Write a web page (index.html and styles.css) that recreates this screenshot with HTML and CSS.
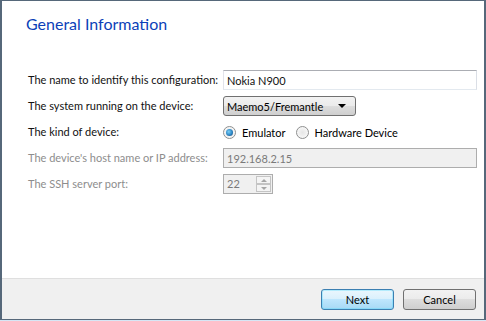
FILE: index.html
```html
<!DOCTYPE html>
<html lang="en">

<head>
    <meta charset="UTF-8">
    <meta name="viewport" content="width=device-width, initial-scale=1.0">
    <title>General Information</title>
    <link rel="stylesheet" href="styles.css">
</head>

<body>
    <div class="wizard">
        <div class="page">
            <div class="title">General Information</div>
            <div class="form">
                <label class="label">The name to identify this configuration:</label>
                <div class="field">
                    <input class="input wide" type="text" value="Nokia N900">
                </div>

                <label class="label">The system running on the device:</label>
                <div class="field">
                    <div class="combo">
                        <span>Maemo5/Fremantle</span>
                        <span class="arrow"></span>
                    </div>
                </div>

                <label class="label">The kind of device:</label>
                <div class="field radios">
                    <span class="radio checked"></span><span class="radio-text">Emulator</span>
                    <span class="radio"></span><span class="radio-text">Hardware Device</span>
                </div>

                <label class="label disabled">The device's host name or IP address:</label>
                <div class="field">
                    <input class="input wide" type="text" value="192.168.2.15" disabled>
                </div>

                <label class="label disabled">The SSH server port:</label>
                <div class="field">
                    <div class="spin">
                        <span class="spin-value">22</span>
                        <div class="spin-buttons">
                            <span class="spin-btn"><span class="up"></span></span>
                            <span class="spin-btn"><span class="down"></span></span>
                        </div>
                    </div>
                </div>
            </div>
        </div>
        <div class="footer">
            <button class="btn default">Next</button>
            <button class="btn">Cancel</button>
        </div>
    </div>
</body>

</html>
```

FILE: styles.css
```css
* {
    margin: 0;
    padding: 0;
    box-sizing: border-box;
    font-family: Lato, "Noto Sans", sans-serif;
}

html,
body {
    background: #d6e6f5;
}

.wizard {
    width: 486px;
    height: 320px;
    border-style: solid;
    border-color: #56687a;
    border-width: 1px 2px 1px 2px;
    display: flex;
    flex-direction: column;
    background: white;
}

.page {
    flex: 1;
    padding: 12px 0 0 24px;
    border-bottom: 1px solid #dfdfdf;
}

.title {
    font-size: 16px;
    color: #0c3fb8;
    height: 22px;
    line-height: 22px;
}

.form {
    display: grid;
    grid-template-columns: 195px 254px;
    grid-auto-rows: 20px;
    row-gap: 6px;
    margin-top: 35px;
    margin-left: 2px;
    font-size: 11px;
}

.label {
    line-height: 20px;
    color: #111;
    white-space: nowrap;
}

.label.disabled {
    color: #8d8d8d;
}

.field {
    display: flex;
    align-items: center;
}

.input {
    height: 20px;
    font-size: 11px;
    padding: 0 3px;
    outline: none;
    border: 1px solid;
    border-color: #abadb3 #dbdfe6 #e3e9ef #e2e3ea;
    color: #111;
    background: white;
}

.input.wide {
    width: 254px;
}

.input:disabled {
    background: #f0f0f0;
    border-color: #adadad;
    color: #7a7a7a;
}

.combo {
    width: 133px;
    height: 20px;
    border: 1px solid #707070;
    border-radius: 3px;
    background: linear-gradient(#f2f2f2 0%, #ebebeb 50%, #dddddd 50%, #cfcfcf 100%);
    display: flex;
    align-items: center;
    justify-content: space-between;
    padding: 0 9px 0 3px;
}

.arrow {
    width: 0;
    height: 0;
    border-left: 4px solid transparent;
    border-right: 4px solid transparent;
    border-top: 4px solid black;
}

.radio {
    width: 13px;
    height: 13px;
    border-radius: 50%;
    border: 1px solid #8e8f8f;
    background: radial-gradient(circle, #e6e6e6 0%, #f4f4f4 60%, #ffffff 100%);
    position: relative;
    margin-right: 6px;
}

.radio.checked::after {
    content: "";
    position: absolute;
    left: 2px;
    top: 2px;
    width: 7px;
    height: 7px;
    border-radius: 50%;
    background: radial-gradient(circle at 40% 40%, #7ad0f8 0%, #2d86c4 55%, #0f3d6a 100%);
}

.radio-text {
    margin-right: 10px;
}

.spin {
    width: 50px;
    height: 20px;
    border: 1px solid #adadad;
    background: #f0f0f0;
    display: flex;
    justify-content: space-between;
    color: #7a7a7a;
}

.spin-value {
    line-height: 18px;
    padding-left: 3px;
}

.spin-buttons {
    width: 16px;
    display: flex;
    flex-direction: column;
    padding: 1px 1px 1px 0;
}

.spin-btn {
    flex: 1;
    border: 1px solid #c4c4c4;
    background: #f4f4f4;
    display: flex;
    align-items: center;
    justify-content: center;
}

.up,
.down {
    width: 0;
    height: 0;
    border-left: 3px solid transparent;
    border-right: 3px solid transparent;
}

.up {
    border-bottom: 3px solid #a6a6a6;
}

.down {
    border-top: 3px solid #a6a6a6;
}

.footer {
    height: 40px;
    background: #f0f0f0;
    display: flex;
    justify-content: flex-end;
    align-items: center;
    gap: 9px;
    padding-right: 8px;
}

.btn {
    width: 73px;
    height: 21px;
    font-size: 11px;
    border: 1px solid #707070;
    border-radius: 3px;
    background: linear-gradient(#f2f2f2 0%, #ebebeb 50%, #dddddd 50%, #cfcfcf 100%);
    color: black;
    outline: none;
}

.btn.default {
    border-color: #3c7fb1;
    background: linear-gradient(#eaf6fd 0%, #d9f0fc 50%, #bee6fd 50%, #a7d9f5 100%);
    box-shadow: inset 0 0 0 1px #48d8fb55;
}
```
